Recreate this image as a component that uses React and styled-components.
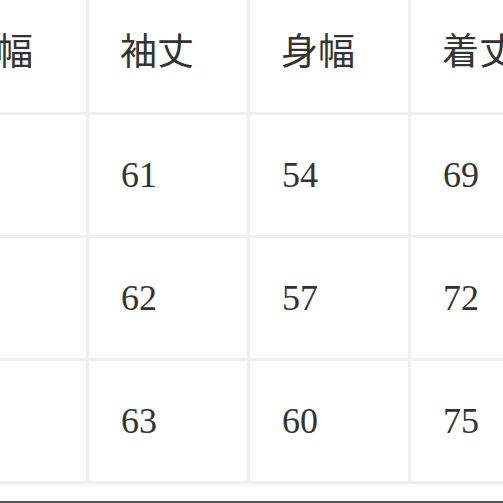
import React from 'react';
import styled, { createGlobalStyle } from 'styled-components';

const GlobalStyle = createGlobalStyle`
    html, body {
        margin: 0;
        padding: 0;
        background: #ffffff;
    }
    body {
        font-family: "Liberation Serif", "Noto Sans CJK JP", serif;
        color: #333333;
    }
`

const headers = ['肩幅', '袖丈', '身幅', '着丈']

// each row: shoulder, sleeve, body width, length
const rows = [
    ['', '61', '54', '69'],
    ['', '62', '57', '72'],
    ['', '63', '60', '75'],
]

function App() {
    return (
        <>
            <GlobalStyle />
            <Page>
                <SizeTable>
                    {headers.map((h) => (
                        <HeadCell key={h}>{h}</HeadCell>
                    ))}
                    {rows.map((row, i) =>
                        row.map((value, j) => (
                            <Cell key={`${i}-${j}`}>{value}</Cell>
                        ))
                    )}
                </SizeTable>
                <BottomRule />
            </Page>
        </>
    )
}

export default App

const Page = styled.div`
    width: 503px;
    height: 503px;
    overflow: hidden;
    display: flex;
    flex-direction: column;
`
const SizeTable = styled.div`
    // the first column is cut off on the left
    margin-left: -72px;
    display: grid;
    grid-template-columns: repeat(4, 158px);
    grid-template-rows: 112px repeat(3, 120px);
    gap: 3px;
    padding-bottom: 3px;
    background-color: #efefef;
    width: max-content;
`
const HeadCell = styled.div`
    background: #ffffff;
    display: flex;
    align-items: center;
    padding: 0 0 14px 31px;
    font-family: "Noto Sans CJK JP", "Liberation Serif", sans-serif;
    font-size: 37px;
    line-height: 1;
    color: #333333;
`
const Cell = styled.div`
    background: #ffffff;
    display: flex;
    align-items: center;
    padding-left: 32px;
    font-family: "Liberation Serif", serif;
    font-size: 36px;
    line-height: 1;
    color: #333333;
`
const BottomRule = styled.div`
    margin-top: auto;
    height: 2px;
    background: #555555;
`
